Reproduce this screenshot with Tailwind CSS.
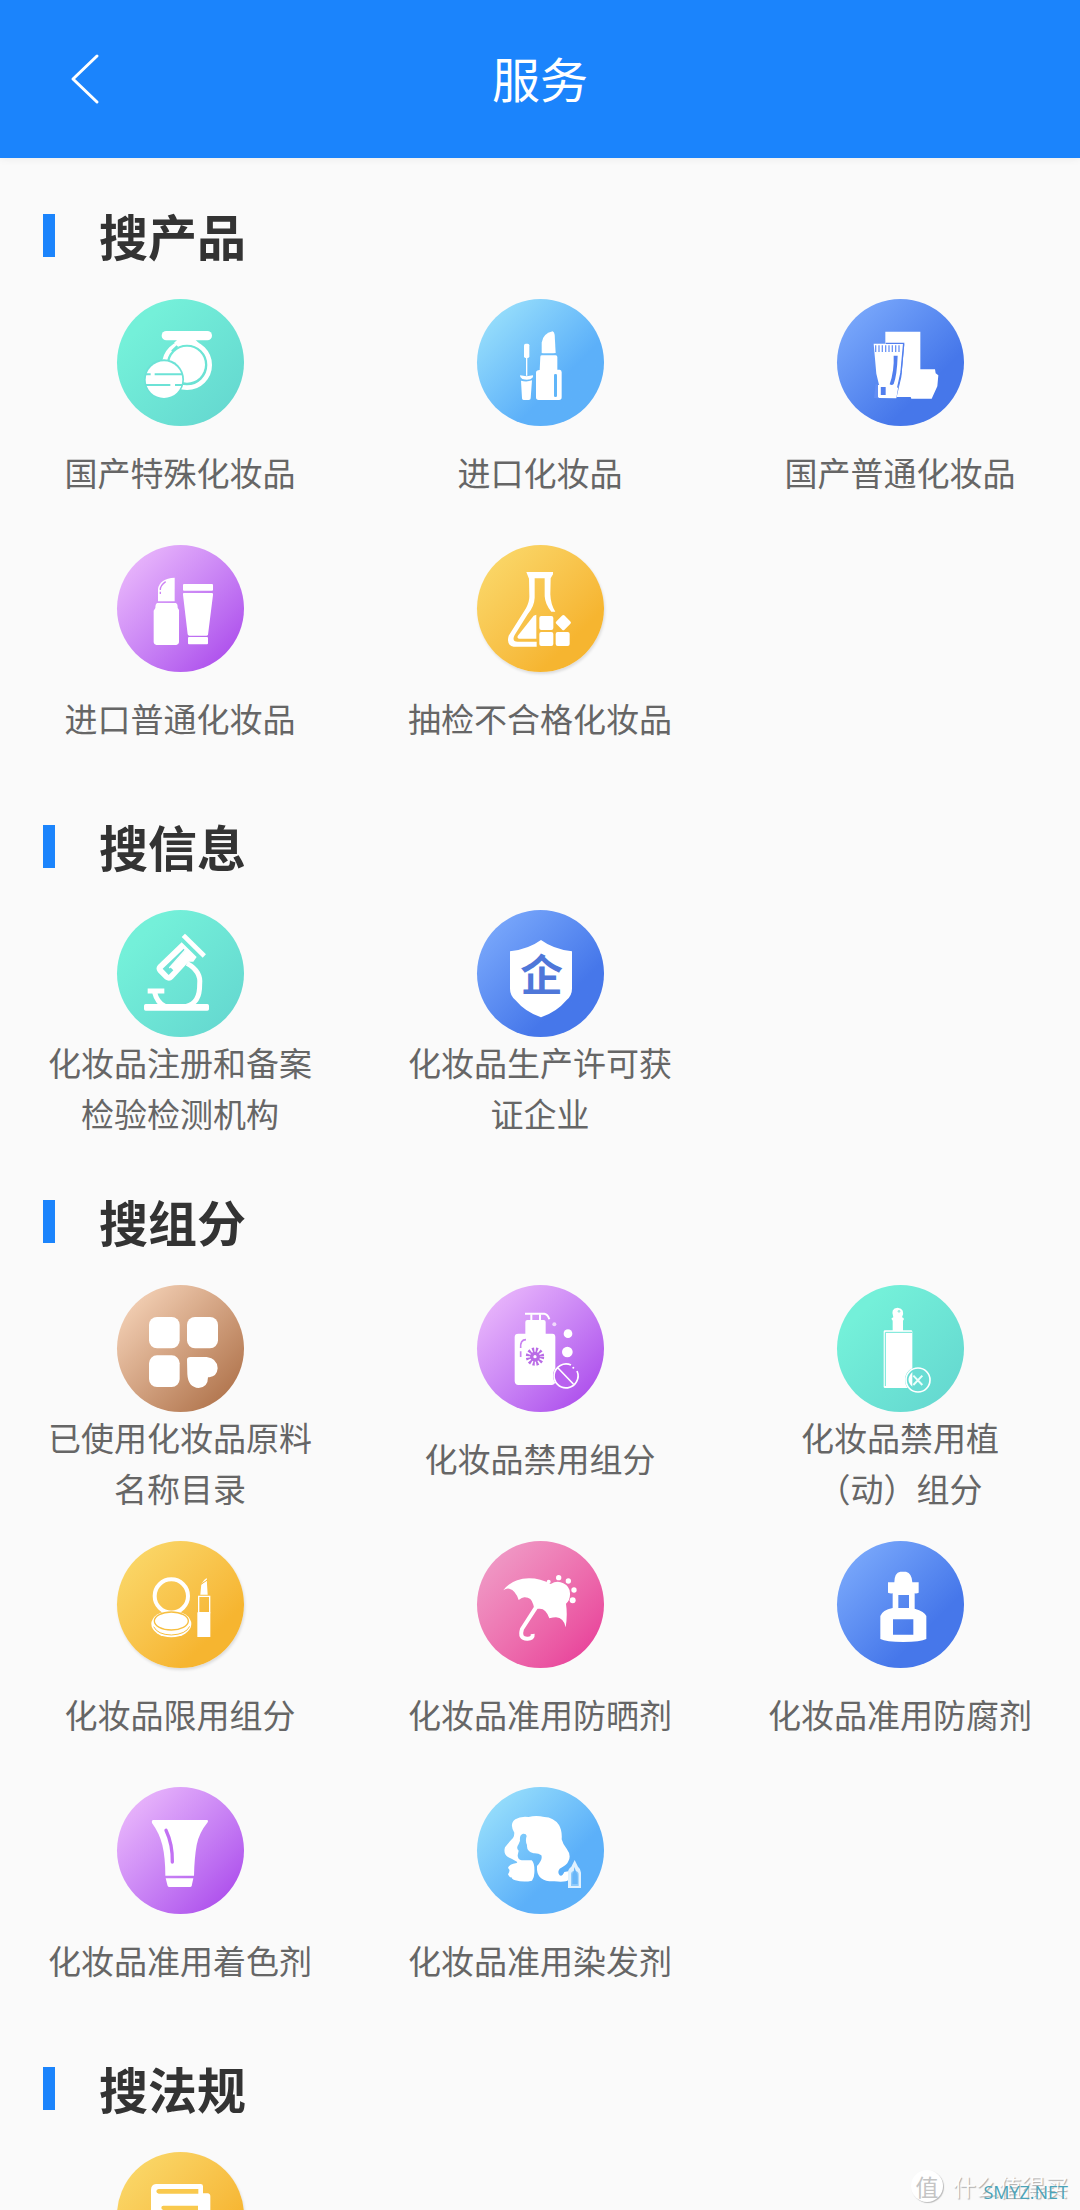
<!DOCTYPE html>
<html lang="zh-CN">
<head>
    <meta charset="UTF-8">
    <meta name="viewport" content="width=device-width, initial-scale=1.0">
    <title>服务</title>
    <script src="https://cdn.jsdelivr.net/npm/@tailwindcss/browser@4"></script>
</head>
<body class="relative flex flex-col h-screen overflow-hidden bg-[#fafafa] font-['Noto_Sans_CJK_SC',sans-serif]">
    <header class="relative z-10 grid grid-cols-[1fr_auto_1fr] items-center h-[158px] shrink-0 bg-[#1b84fc] px-12 text-white shadow-[0_1px_8px_rgba(0,0,0,0.06)]">
        <button type="button" aria-label="返回" class="w-20 h-20 justify-self-start">
            <svg class="w-20 h-20" viewBox="0 0 80 80" fill="none" stroke="currentColor" stroke-width="3" stroke-linecap="round" stroke-linejoin="round"><path d="M49 17 25 40 49 63"/></svg>
        </button>
        <h1 class="pb-1 text-[48px] leading-[72px]">服务</h1>
    </header>

    <main class="grow overflow-y-auto pt-[22px] [scrollbar-width:none]">
        <!-- 搜产品 -->
        <section class="pt-[19px]">
            <h2 class="flex items-center mb-7 pl-[43px] text-[49px] leading-[72px] font-bold text-[#333]"><span class="w-3 h-[43px] mr-11 bg-[#1b84fc]"></span>搜产品</h2>
            <div class="grid grid-cols-3 gap-y-[27px] pb-[27px]">
                <a href="#" class="flex flex-col items-center">
                    <span class="size-[127px] rounded-full bg-linear-135 from-[#74f0d9] from-20% to-[#63d5cf]">
                        <svg viewBox="48 57 381 381" fill="#fff">
                            <rect x="182" y="153" width="151" height="28" rx="14"/>
                            <path d="M232 176h48l14 14h-76z"/>
                            <circle cx="258" cy="255" r="68" fill="none" stroke="#fff" stroke-width="14"/>
                            <circle cx="258" cy="254" r="54"/>
                            <path d="m213 214 16-16" stroke="#6de6d6" stroke-width="7"/>
                            <circle cx="189" cy="298" r="60" fill="#6ce2d6"/>
                            <circle cx="189" cy="299" r="55"/>
                            <path d="M134 283h15m12 0h82M134 315h74m14 0h22" stroke="#6ce2d6" stroke-width="6"/>
                        </svg>
                    </span>
                    <span class="flex items-center justify-center min-h-[92px] max-w-[270px] text-center text-[33px] leading-[51px] text-[#666]">国产特殊化妆品</span>
                </a>
                <a href="#" class="flex flex-col items-center">
                    <span class="size-[127px] rounded-full bg-linear-135 from-[#98dffb] from-10% to-[#5cb0f9] to-65%">
                        <svg viewBox="48 57 381 381" fill="#fff">
                            <path d="M242 219v-31q3-27 33-34 5 2 6 10l3 55-7 1h-31z"/>
                            <path d="M238 230q0-4 5-4h41q5 0 5 5v38h7q6 1 6 8v75q0 8-8 8h-61q-8 0-8-8v-74q0-8 11-8z"/>
                            <rect x="279" y="282" width="9" height="69" rx="4" fill="#61b6f9"/>
                            <rect x="189" y="191" width="16" height="43" rx="5"/>
                            <path d="M195 230h4v57h-4z"/>
                            <path d="M177 286q20 5 39 0 2 7-8 12-12 3-24-1-8-4-7-11z"/>
                            <path d="M180 302q17 5 33-1l-4 54q0 5-6 5h-15q-5 0-5-5z"/>
                        </svg>
                    </span>
                    <span class="flex items-center justify-center min-h-[92px] max-w-[270px] text-center text-[33px] leading-[51px] text-[#666]">进口化妆品</span>
                </a>
                <a href="#" class="flex flex-col items-center">
                    <span class="size-[127px] rounded-full bg-linear-135 from-[#7aa8fb] from-10% to-[#4677ea] to-70%">
                        <svg viewBox="1128 57 381 381" fill="#fff">
                            <path d="M1273 155h105v113h44l2 12 8 6-3 33-17 37h-61l-2-5h-42l14-60 9-98h-57z"/>
                            <path d="M1238 191h90l-9 88-13 76-51-1q-6-3-5-20l4-20-8-33z"/>
                            <path d="M1274 190h54l-8 88-10 45" fill="none" stroke="#527fee" stroke-width="4"/>
                            <path d="M1242 206h80" stroke="#6e97f6" stroke-width="20" stroke-dasharray="4 6"/>
                            <path d="M1298 227h12q-2 59-12 85-5 6-12 1 14-41 12-86z" fill="#527fee"/>
                            <path d="M1259 321h15v24h-15z" fill="#527fee"/>
                            <path d="m1244 312 12 3-5 40-12-1z" fill="#638ef4"/>
                            <path d="M1251 315h7v37h-7z"/>
                        </svg>
                    </span>
                    <span class="flex items-center justify-center min-h-[92px] max-w-[270px] text-center text-[33px] leading-[51px] text-[#666]">国产普通化妆品</span>
                </a>
                <a href="#" class="flex flex-col items-center">
                    <span class="size-[127px] rounded-full bg-linear-135 from-[#e9b6fb] from-10% to-[#ad4dec] to-90%">
                        <svg viewBox="48 45 381 381" fill="#fff">
                            <path d="M171 214v-37q5-32 50-34v71z"/>
                            <path d="M194 155q-17 12-16 25m0 5v7" fill="none" stroke="#cd83f4" stroke-width="4"/>
                            <path d="M169 219h55q6 1 6 14l4 7v97q-1 8-8 8h-60q-7 0-8-8v-95l5-8q0-13 6-15z"/>
                            <rect x="246" y="162" width="90" height="20" rx="3"/>
                            <path d="M248 189h86q3 1 2 6l-15 119q-1 3-5 3h-51q-4 0-5-4l-14-119q-1-5 2-5z"/>
                            <rect x="261" y="321" width="60" height="22" rx="3"/>
                        </svg>
                    </span>
                    <span class="flex items-center justify-center min-h-[92px] max-w-[270px] text-center text-[33px] leading-[51px] text-[#666]">进口普通化妆品</span>
                </a>
                <a href="#" class="flex flex-col items-center">
                    <span class="size-[127px] rounded-full bg-linear-135 from-[#fad768] from-10% to-[#f6b530] to-75% shadow-[1px_2px_3px_rgba(0,0,0,0.12)]">
                        <svg viewBox="1128 45 381 381" fill="#fff">
                            <path d="M1276 126h80v7l-7 12-1 48q1 31 15 52h-12q-18-20-20-46v-54h-30v58q-1 26-21 50l-39 62q-10 19 9 20h57v15h-69q-23-5-15-33l52-82q11-21 10-38l-1-51z"/>
                            <path d="M1306 254v72h-53q-6-3-3-8l48-61z"/>
                            <rect x="1315" y="258" width="42" height="42" rx="6"/>
                            <rect x="1315" y="306" width="42" height="42" rx="6"/>
                            <rect x="1364" y="306" width="42" height="42" rx="6"/>
                            <rect x="1370" y="260" width="35" height="35" rx="5" transform="rotate(45 1387 277)"/>
                        </svg>
                    </span>
                    <span class="flex items-center justify-center min-h-[92px] max-w-[270px] text-center text-[33px] leading-[51px] text-[#666]">抽检不合格化妆品</span>
                </a>
            </div>
        </section>

        <!-- 搜信息 -->
        <section class="pt-[19px]">
            <h2 class="flex items-center mb-7 pl-[43px] text-[49px] leading-[72px] font-bold text-[#333]"><span class="w-3 h-[43px] mr-11 bg-[#1b84fc]"></span>搜信息</h2>
            <div class="grid grid-cols-3 gap-y-[27px] pb-[27px]">
                <a href="#" class="flex flex-col items-center">
                    <span class="size-[127px] rounded-full bg-linear-135 from-[#74f0d9] from-20% to-[#63d5cf]">
                        <svg viewBox="48 60 381 381" fill="#fff">
                            <path d="m252 141 53 52" stroke="#fff" stroke-width="14" stroke-linecap="square" fill="none"/>
                            <path d="m242 157 45 44-10 14h-14l-47 51q-10 11-24 2l-21-21q-9-12 0-22z"/>
                            <path d="m248 176-63 60 18 19 14-14-9-9 45-50z" fill="#6ce2d6"/>
                            <path d="m253 180-48 54" stroke="#fff" stroke-width="4"/>
                            <path d="M258 220q43 24 38 63 1 56-40 66M140 303h50M160 305q9 35 32 44" fill="none" stroke="#fff" stroke-width="15"/>
                            <rect x="129" y="342" width="195" height="20" rx="5"/>
                        </svg>
                    </span>
                    <span class="flex items-center justify-center min-h-[92px] max-w-[270px] text-center text-[33px] leading-[51px] text-[#666]">化妆品注册和备案检验检测机构</span>
                </a>
                <a href="#" class="flex flex-col items-center">
                    <span class="size-[127px] rounded-full bg-linear-135 from-[#7aa8fb] from-10% to-[#4677ea] to-70%">
                        <svg viewBox="1128 60 381 381" fill="#fff">
                            <path d="M1320 150q38 28 93 34v112q0 20-16 34-30 36-77 52-47-16-77-52-16-14-16-34V184q55-6 93-34z"/>
                            <text x="1322" y="304" text-anchor="middle" font-size="128" font-weight="700" fill="#4f77d9">企</text>
                        </svg>
                    </span>
                    <span class="flex items-center justify-center min-h-[92px] max-w-[270px] text-center text-[33px] leading-[51px] text-[#666]">化妆品生产许可获证企业</span>
                </a>
            </div>
        </section>

        <!-- 搜组分 -->
        <section class="pt-[19px]">
            <h2 class="flex items-center mb-7 pl-[43px] text-[49px] leading-[72px] font-bold text-[#333]"><span class="w-3 h-[43px] mr-11 bg-[#1b84fc]"></span>搜组分</h2>
            <div class="grid grid-cols-3 gap-y-[27px] pb-[27px]">
                <a href="#" class="flex flex-col items-center">
                    <span class="size-[127px] rounded-full bg-linear-135 from-[#f3d0b5] from-10% to-[#b0744c] to-90%">
                        <svg viewBox="48 45 381 381" fill="#fff">
                            <rect x="144" y="141" width="92" height="94" rx="24"/>
                            <rect x="258" y="141" width="93" height="94" rx="24"/>
                            <rect x="144" y="256" width="92" height="95" rx="24"/>
                            <path d="M258 269q0-8 10-8h49q32 4 33 34-2 24-25 27h-4q0 30-28 32-32-2-34-42z"/>
                        </svg>
                    </span>
                    <span class="flex items-center justify-center min-h-[92px] max-w-[270px] text-center text-[33px] leading-[51px] text-[#666]">已使用化妆品原料名称目录</span>
                </a>
                <a href="#" class="flex flex-col items-center">
                    <span class="size-[127px] rounded-full bg-linear-135 from-[#e9b6fb] from-10% to-[#ad4dec] to-90%">
                        <svg viewBox="1128 45 381 381" fill="#fff">
                            <path d="M1272 131h58q11 2 15 17" fill="none" stroke="#fff" stroke-width="6"/>
                            <path d="M1291 133v18m26-18v18" stroke="#fff" stroke-width="6"/>
                            <path d="M1273 156q0-6 6-6h49q6 0 6 6v35h20q9 0 9 10v133q0 10-10 11h-101q-10 0-11-11V201q0-10 11-10h21z"/>
                            <path d="M1275 209q-18 0-16 25m0 10v17" fill="none" stroke="#c983f1" stroke-width="5"/>
                            <circle cx="1302" cy="260" r="17" fill="none" stroke="#b96be6" stroke-width="21" stroke-dasharray="5 3.9"/>
                            <circle cx="1302" cy="260" r="10" fill="none" stroke="#b96be6" stroke-width="10"/>
                            <circle cx="1360" cy="163" r="6" fill="#f1dafc"/>
                            <circle cx="1401" cy="191" r="13"/>
                            <circle cx="1399" cy="246" r="16"/>
                            <circle cx="1393" cy="317" r="37" fill="#b961ef"/>
                            <path d="M1428 303a36 36 0 1 1-18-18m-42 6 49 51" fill="none" stroke="#fff" stroke-width="5"/>
                            <circle cx="1417" cy="293" r="3"/>
                        </svg>
                    </span>
                    <span class="flex items-center justify-center min-h-[92px] max-w-[270px] text-center text-[33px] leading-[51px] text-[#666]">化妆品禁用组分</span>
                </a>
                <a href="#" class="flex flex-col items-center">
                    <span class="size-[127px] rounded-full bg-linear-135 from-[#74f0d9] from-20% to-[#63d5cf]">
                        <svg viewBox="48 45 381 381" fill="#fff">
                            <path d="M211 146q3-3 6-4-10-27 13-29 24 3 13 29 4 1 6 5l-3 5v31h-31v-31z"/>
                            <circle cx="234" cy="124" r="4" fill="#9eeee2"/>
                            <rect x="188" y="181" width="86" height="173" rx="4"/>
                            <path d="M193 348V187h80" fill="none" stroke="#6ee6d7" stroke-width="3"/>
                            <circle cx="291" cy="330" r="39" fill="#69ddd4"/>
                            <path d="M274 306v44q-23-20 0-44z"/>
                            <circle cx="291" cy="330" r="36" fill="none" stroke="#fff" stroke-width="5"/>
                            <path d="m277 317 27 28m0-28-27 28" stroke="#eafffb" stroke-width="6"/>
                        </svg>
                    </span>
                    <span class="flex items-center justify-center min-h-[92px] max-w-[270px] text-center text-[33px] leading-[51px] text-[#666]">化妆品禁用植（动）组分</span>
                </a>
                <a href="#" class="flex flex-col items-center">
                    <span class="size-[127px] rounded-full bg-linear-135 from-[#fad768] from-10% to-[#f6b530] to-75% shadow-[1px_2px_3px_rgba(0,0,0,0.12)]">
                        <svg viewBox="48 33 381 381" fill="#fff">
                            <circle cx="211" cy="198" r="50" fill="none" stroke="#fff" stroke-width="12"/>
                            <ellipse cx="211" cy="282" rx="60" ry="40"/>
                            <ellipse cx="211" cy="273" rx="51" ry="27" fill="none" stroke="#f7bf40" stroke-width="4"/>
                            <path d="M158 290q12 24 53 25 44-2 55-26" fill="none" stroke="#f7bf40" stroke-width="3"/>
                            <path d="m298 194 3-32q8-14 16-18l3 50z"/>
                            <path d="m300 163 19-13" stroke="#f7b936" stroke-width="3"/>
                            <path d="M293 199h33v49h-33z" fill="none" stroke="#fff" stroke-width="4"/>
                            <path d="M289 247h39v74h-39z"/>
                        </svg>
                    </span>
                    <span class="flex items-center justify-center min-h-[92px] max-w-[270px] text-center text-[33px] leading-[51px] text-[#666]">化妆品限用组分</span>
                </a>
                <a href="#" class="flex flex-col items-center">
                    <span class="size-[127px] rounded-full bg-linear-135 from-[#ef9ac6] from-10% to-[#e9489d] to-85%">
                        <svg viewBox="1128 33 381 381" fill="#fff">
                            <path d="M1207 181q24-34 77-36 35 0 65 17 20-13 38-2 20 10 20 30 1 21-12 31 5 35-1 71-6-29-29-30-8 0-20 3-10-31-31-29l-14 1-3-13q-6-23-27-22-7 1-17 8-9-29-28-34-9-2-18 5z"/>
                            <path d="m1305 232-42 65q-9 29 15 29 19 1 17-14" fill="none" stroke="#fff" stroke-width="12"/>
                            <circle cx="1343" cy="155" r="6"/>
                            <circle cx="1373" cy="143" r="8"/>
                            <circle cx="1402" cy="153" r="8"/>
                            <circle cx="1419" cy="180" r="8"/>
                            <circle cx="1415" cy="211" r="9"/>
                        </svg>
                    </span>
                    <span class="flex items-center justify-center min-h-[92px] max-w-[270px] text-center text-[33px] leading-[51px] text-[#666]">化妆品准用防晒剂</span>
                </a>
                <a href="#" class="flex flex-col items-center">
                    <span class="size-[127px] rounded-full bg-linear-135 from-[#7aa8fb] from-10% to-[#4677ea] to-70%">
                        <svg viewBox="48 33 381 381" fill="#fff" fill-rule="evenodd">
                            <path d="M220 157q0-29 18-32h17q18 5 19 32h19v31q-5 3-12 2v46q30 8 35 22v69q-17 9-69 9t-69-9v-69q6-18 37-24v-44q-8 1-14-2v-31zM232 195v39h32v-39zM216 268v46h61v-46z"/>
                        </svg>
                    </span>
                    <span class="flex items-center justify-center min-h-[92px] max-w-[270px] text-center text-[33px] leading-[51px] text-[#666]">化妆品准用防腐剂</span>
                </a>
                <a href="#" class="flex flex-col items-center">
                    <span class="size-[127px] rounded-full bg-linear-135 from-[#e9b6fb] from-10% to-[#ad4dec] to-90%">
                        <svg viewBox="48 51 381 381" fill="#fff">
                            <path d="M155 150h164q4 2 1 7-26 32-33 68-7 40-8 92h-86q0-54-9-92-9-36-31-66-2-6 2-9z"/>
                            <path d="M195 181q20 42 19 95" fill="none" stroke="#c271f3" stroke-width="10" stroke-linecap="round"/>
                            <path d="M194 325h83l-5 23q-1 3-5 3h-62q-4 0-5-3z"/>
                        </svg>
                    </span>
                    <span class="flex items-center justify-center min-h-[92px] max-w-[270px] text-center text-[33px] leading-[51px] text-[#666]">化妆品准用着色剂</span>
                </a>
                <a href="#" class="flex flex-col items-center">
                    <span class="size-[127px] rounded-full bg-linear-135 from-[#98dffb] from-10% to-[#5cb0f9] to-65%">
                        <svg viewBox="1128 51 381 381" fill="#fff">
                            <path d="M1240 188Q1224 162 1243 148 1258 138 1283 141 1305 135 1330 141 1358 142 1374 165 1384 182 1382 208 1386 224 1397 236 1412 256 1402 274 1398 286 1376 296 1368 306 1376 316 1384 320 1390 306L1402 304V330Q1396 337 1360 334 1312 336 1308 300V288Q1326 268 1321 256 1312 249 1298 250 1276 244 1278 225 1272 212 1277 198 1276 190 1266 191 1255 194 1257 212L1253 222Q1244 234 1253 242L1250 256Q1250 270 1262 271H1292Q1302 280 1300 310 1300 322 1293 332 1268 338 1243 331 1232 328 1232 322 1226 324 1221 313 1230 300 1221 294 1224 282 1247 279L1249 276Q1236 268 1222 262 1206 252 1212 232 1224 216 1236 204 1240 198 1240 188Z"/>
                            <path d="m1421 270 10 20q9 7 9 18v46h-39v-43q-2-12 10-21z" fill="#dff1fe"/>
                            <path d="M1410 348v-34q-1-10 11-12 13 2 12 12v34z" fill="#8bc9fb"/>
                            <path d="m1420 291 6 16q5 6 4 13v22h-16v-22q-2-8 4-15z" fill="#68b6f8"/>
                        </svg>
                    </span>
                    <span class="flex items-center justify-center min-h-[92px] max-w-[270px] text-center text-[33px] leading-[51px] text-[#666]">化妆品准用染发剂</span>
                </a>
            </div>
        </section>

        <!-- 搜法规 -->
        <section class="pt-[19px]">
            <h2 class="flex items-center mb-7 pl-[43px] text-[49px] leading-[72px] font-bold text-[#333]"><span class="w-3 h-[43px] mr-11 bg-[#1b84fc]"></span>搜法规</h2>
            <div class="grid grid-cols-3 gap-y-[27px] pb-[27px]">
                <a href="#" aria-label="法规" class="flex flex-col items-center">
                    <span class="size-[127px] rounded-full bg-linear-135 from-[#fad768] from-10% to-[#f6b530] to-75% shadow-[1px_2px_3px_rgba(0,0,0,0.12)]">
                        <svg viewBox="348 336 381 381" fill="#fff">
                            <path d="M465 432h134q7 0 7 7v21h14q8 1 8 9v170H462q-12-1-12-13V450q0-16 15-18z"/>
                            <path d="M473 447h119v14H473q-7-1-7-7t7-7zM487 497h104v13H487q-6-1-6-7t6-6zM487 540h104v13H487q-6-1-6-7t6-6z" fill="#f9c94e"/>
                        </svg>
                    </span>
                </a>
            </div>
        </section>
    </main>

    <!-- 水印 -->
    <div class="absolute right-3 bottom-2 z-20 flex items-center gap-2.5 text-[#fdfdfd] [text-shadow:1px_1px_1px_#aaa]">
        <span class="flex items-center justify-center size-8 rounded-full bg-white text-[23px] leading-8 text-[#c4c4c4] shadow-[1px_1px_1px_#bbb] [text-shadow:none]">值</span>
        <span class="text-[23px] leading-8">什么值得买</span>
        <span class="absolute right-0 -bottom-0.5 font-['Open_Sans',sans-serif] text-[18px] leading-6 text-[#4ba3b8] [text-shadow:none]">SMYZ.NET</span>
    </div>
</body>
</html>
